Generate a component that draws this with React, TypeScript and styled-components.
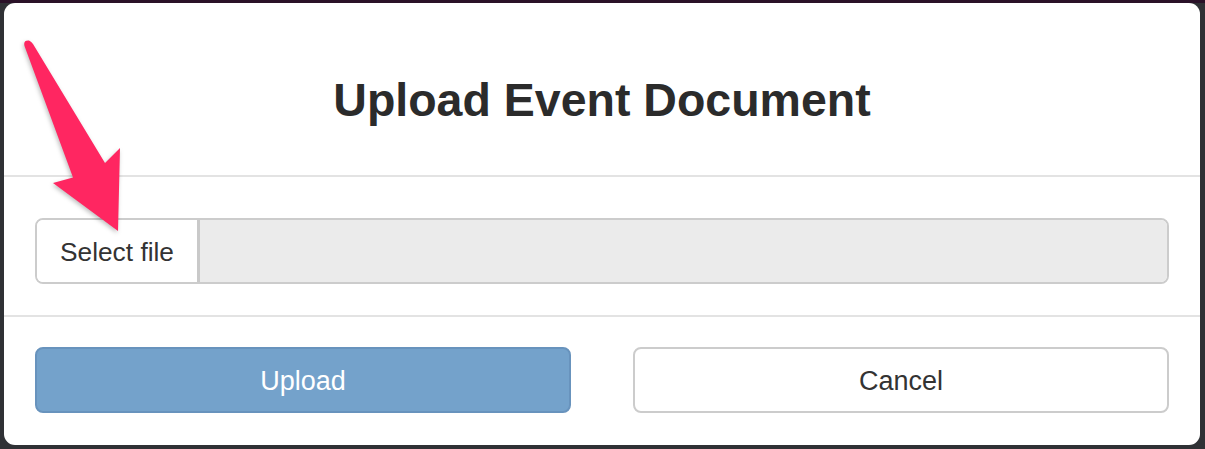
import React from "react";
import styled, { createGlobalStyle } from "styled-components";

const Global = createGlobalStyle`
  html, body { margin: 0; padding: 0; }
  body {
    width: 1205px;
    height: 449px;
    overflow: hidden;
    background: #2f3135;
    font-family: "Liberation Sans", Arial, sans-serif;
  }
`;

const Page = styled.div`
  position: relative;
  width: 1205px;
  height: 449px;
  box-sizing: border-box;
  border-top: 3px solid #2a1128;
  padding: 0 5px 4px 4px;
  display: flex;
  background: #2f3135;
`;

const Modal = styled.div`
  flex: 1;
  background: #ffffff;
  border-radius: 11px;
  display: flex;
  flex-direction: column;
  overflow: hidden;
`;

const Header = styled.div`
  height: 174px;
  flex-shrink: 0;
  display: flex;
  align-items: center;
  justify-content: center;
  border-bottom: 2px solid #e3e3e3;
  box-sizing: border-box;
  padding-top: 22px;
`;

const Title = styled.h4`
  margin: 0;
  font-size: 46.5px;
  font-weight: 700;
  color: #2b2b2b;
  line-height: 1;
`;

const Body = styled.div`
  flex-shrink: 0;
  padding: 41px 31px 31px;
  border-bottom: 2px solid #e3e3e3;
`;

const InputGroup = styled.div`
  display: flex;
  height: 66px;
  box-sizing: border-box;
  border: 2px solid #cccccc;
  border-radius: 8px;
  overflow: hidden;
`;

const SelectButton = styled.button`
  width: 163px;
  background: #ffffff;
  border: none;
  border-right: 3px solid #c9c9c9;
  font-family: "Liberation Sans", Arial, sans-serif;
  font-size: 26.3px;
  color: #333333;
  padding: 0;
  padding-top: 2px;
`;

const FileField = styled.div`
  flex: 1;
  background: #ebebeb;
`;

const Footer = styled.div`
  padding: 30px 31px 30px;
  display: grid;
  grid-template-columns: 1fr 1fr;
  column-gap: 62px;
`;

const ActionButton = styled.button<{ $primary?: boolean }>`
  height: 66px;
  border-radius: 8px;
  box-sizing: border-box;
  border: 2px solid ${(p) => (p.$primary ? "#6893bd" : "#cccccc")};
  background: ${(p) => (p.$primary ? "#74a2cb" : "#ffffff")};
  color: ${(p) => (p.$primary ? "#ffffff" : "#333333")};
  font-family: "Liberation Sans", Arial, sans-serif;
  font-size: 27px;
  padding: 0;
  padding-top: 3px;
`;

const ArrowLayer = styled.svg`
  position: absolute;
  left: 0;
  top: 0;
  pointer-events: none;
  filter: drop-shadow(-1px 2px 2px rgba(0, 0, 0, 0.25));
`;

export default function App() {
  return (
    <>
      <Global />
      <Page>
        <Modal>
          <Header>
            <Title>Upload Event Document</Title>
          </Header>
          <Body>
            <InputGroup>
              <SelectButton>Select file</SelectButton>
              <FileField />
            </InputGroup>
          </Body>
          <Footer>
            <ActionButton $primary>Upload</ActionButton>
            <ActionButton>Cancel</ActionButton>
          </Footer>
        </Modal>
        <ArrowLayer width="1205" height="449" viewBox="0 0 1205 449">
          <path
            d="M24.5 43 Q23 37 29 37.5 Q31.5 38.5 33 41 L105 160 L120 145 L118 228 L53 180 L73 174.5 Z"
            fill="#ff2661"
            strokeLinejoin="round"
          />
        </ArrowLayer>
      </Page>
    </>
  );
}
